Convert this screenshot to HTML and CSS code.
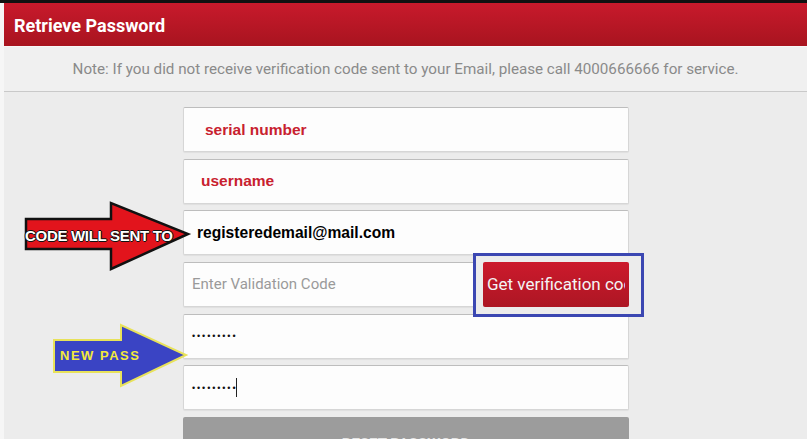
FILE: index.html
```html
<!DOCTYPE html>
<html lang="en">
<head>
    <meta charset="UTF-8">
    <meta name="viewport" content="width=device-width, initial-scale=1.0">
    <title>Retrieve Password</title>
    <link rel="stylesheet" href="styles.css">
</head>
<body>
    <div class="topbar"></div>
    <div class="app">
        <header class="header">Retrieve Password</header>
        <div class="note">Note: If you did not receive verification code sent to your Email, please call 4000666666 for service.</div>

        <div class="content">
            <form class="form">
                <div class="field"><span class="mark serial">serial number</span></div>
                <div class="field"><span class="mark user">username</span></div>
                <div class="field"><span class="email">registeredemail@mail.com</span></div>
                <div class="code-row">
                    <div class="field code"><span class="placeholder">Enter Validation Code</span></div>
                    <div class="get-code">
                        <button type="button" class="get-btn"><span class="get-label">Get verification code</span></button>
                        <div class="highlight"></div>
                    </div>
                </div>
                <div class="field"><span class="dots">•••••••••</span></div>
                <div class="field"><span class="dots">•••••••••</span><span class="caret"></span></div>
                <button type="button" class="reset-btn">RESET PASSWORD</button>
            </form>
        </div>

        <!-- flechas de anotación -->
        <div class="arrow arrow-red">
            <svg width="168" height="72" viewBox="0 0 168 72">
                <polygon points="2,18 87,18 87,2 164,33 87,68 87,48 2,48" fill="#e2141c" stroke="#111" stroke-width="2.5"/>
            </svg>
            <span class="arrow-text code-text">CODE WILL SENT TO</span>
        </div>
        <div class="arrow arrow-blue">
            <svg width="138" height="66" viewBox="0 0 138 66">
                <polygon points="2,17 69,17 69,2 134,32 69,63 69,49 2,49" fill="#3a44c4" stroke="#e8e25a" stroke-width="2"/>
            </svg>
            <span class="arrow-text pass-text">NEW PASS</span>
        </div>
    </div>
</body>
</html>
```

FILE: styles.css
```css
body {
    margin: 0;
    padding: 0;
    height: 439px;
    overflow: hidden;
    background-color: #f6f6f6;
    font-family: Roboto, "Liberation Sans", sans-serif;
}

.topbar {
    height: 3px;
    background-color: #111;
}

.app {
    position: relative;
    margin-left: 4px;
    height: 436px;
    overflow: hidden;
    background-color: #ececec;
}

.header {
    height: 43px;
    padding-left: 10px;
    padding-top: 1px;
    box-sizing: border-box;
    line-height: 43px;
    font-size: 18px;
    font-weight: bold;
    color: #fff;
    background: linear-gradient(#c81a2c, #a8141f);
}

.note {
    height: 46px;
    line-height: 45px;
    box-sizing: border-box;
    text-align: center;
    font-size: 15.2px;
    color: #8a8a8a;
    background-color: #f0f0f0;
    border-top: 1px solid #f7f7f7;
    border-bottom: 1px solid #c9c9c9;
}

.content {
    display: flex;
    justify-content: center;
    padding-top: 15px;
    padding-left: 1px;
}

.form {
    width: 446px;
    display: flex;
    flex-direction: column;
    gap: 6.67px;
}

.field {
    height: 45px;
    box-sizing: border-box;
    display: flex;
    align-items: center;
    background-color: #fdfdfd;
    border: 1px solid #d6d6d6;
    border-top-color: #bdbdbd;
    border-radius: 2px;
    box-shadow: 0 1px 1px rgba(0, 0, 0, 0.06);
    padding-left: 8px;
}

.mark {
    font-family: "Liberation Sans", Arial, sans-serif;
    font-weight: bold;
    font-size: 15.5px;
    color: #c8212f;
}

.mark.serial {
    margin-left: 13px;
}

.mark.user {
    margin-left: 9px;
}

.email {
    margin-left: 5px;
    font-family: "Liberation Sans", Arial, sans-serif;
    font-weight: bold;
    font-size: 15.6px;
    color: #000;
}

.code-row {
    display: flex;
    gap: 7px;
}

.field.code {
    flex: 1;
}

.placeholder {
    font-size: 15px;
    color: #9a9a9a;
}

.get-code {
    position: relative;
    width: 146px;
}

.get-btn {
    width: 100%;
    height: 45px;
    padding: 0 4px 0 4px;
    border: none;
    border-radius: 2px;
    text-align: left;
    font-family: Roboto, "Liberation Sans", sans-serif;
    font-size: 17px;
    color: #f4f4f4;
    background: linear-gradient(#cc1a2c, #ad1624);
}

.get-label {
    display: block;
    white-space: nowrap;
    overflow: hidden;
}

.highlight {
    position: absolute;
    left: -10px;
    top: -9px;
    right: -15px;
    bottom: -10px;
    border: 3px solid #3b47b2;
    pointer-events: none;
}

.dots {
    font-family: "Liberation Sans", Arial, sans-serif;
    font-size: 9px;
    letter-spacing: 1.9px;
    color: #111;
}

.caret {
    display: inline-block;
    width: 1px;
    height: 19px;
    margin-left: -1px;
    background-color: #222;
}

.reset-btn {
    height: 45px;
    padding-top: 10px;
    border: none;
    border-radius: 2px;
    font-family: Roboto, "Liberation Sans", sans-serif;
    font-size: 15px;
    font-weight: bold;
    color: #e4e4e4;
    background-color: #9c9c9c;
}

.arrow {
    position: absolute;
}

.arrow svg {
    display: block;
}

.arrow-red {
    left: 20px;
    top: 198px;
}

.arrow-blue {
    left: 48px;
    top: 320px;
}

.arrow-text {
    position: absolute;
    font-family: "Liberation Sans", Arial, sans-serif;
    font-weight: bold;
    white-space: nowrap;
}

.code-text {
    left: 1px;
    top: 26px;
    font-size: 15px;
    letter-spacing: -0.3px;
    color: #fff;
    text-shadow: 1px 0 0 #111, -1px 0 0 #111, 0 1px 0 #111, 0 -1px 0 #111;
}

.pass-text {
    left: 8px;
    top: 25px;
    font-size: 13px;
    letter-spacing: 1.5px;
    color: #f3ea3a;
}
```
